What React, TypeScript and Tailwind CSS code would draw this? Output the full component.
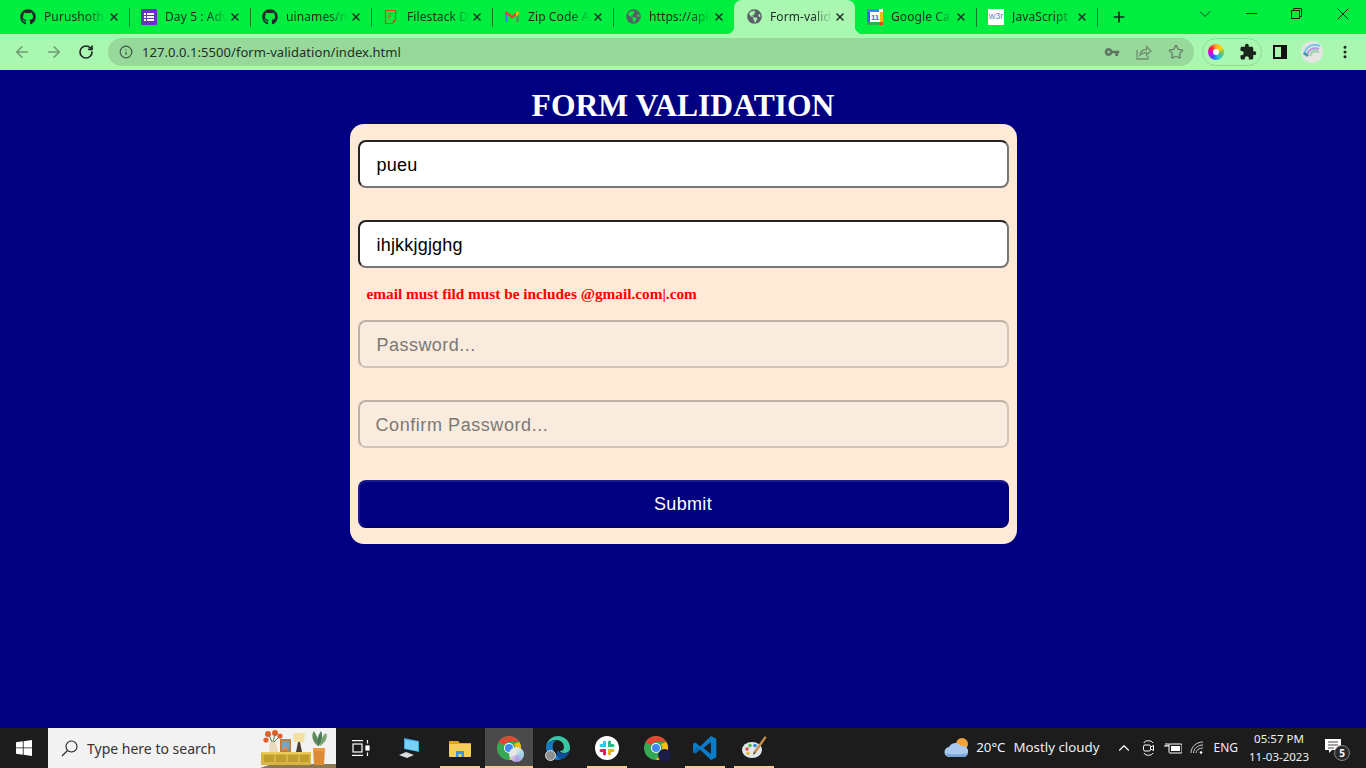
import React from "react";
import { ArrowLeft, ArrowRight, RotateCw, Info, Star, X, Plus, ChevronUp, MoreVertical } from "lucide-react";
import { FaGithub, FaGlobeAmericas } from "react-icons/fa";
import { MdExtension, MdVpnKey } from "react-icons/md";

const FormsIcon = () => (
  <svg width="16" height="16" viewBox="0 0 16 16"><rect width="16" height="16" rx="1" fill="#6b30c9" />
    <g fill="#fff"><rect x="3" y="4" width="2" height="2" /><rect x="6" y="4" width="7" height="2" /><rect x="3" y="7" width="2" height="2" /><rect x="6" y="7" width="7" height="2" /><rect x="3" y="10" width="2" height="2" /><rect x="6" y="10" width="7" height="2" /></g></svg>
);
const FilestackIcon = () => (
  <svg width="16" height="16" viewBox="0 0 16 16" fill="none"><path d="M2.500 1.500h10v10l-3 3h-7z" stroke="#ef3a1d" strokeWidth="1.200" /><path d="M6 4.500h4M6 7h3M6 4.500v5" stroke="#c9661a" strokeWidth="1.200" /><path d="M10 14v-3h3" fill="#ef3a1d" /></svg>
);
const GmailIcon = () => (
  <svg width="16" height="16" viewBox="0 0 16 16"><path d="M1 13V4l3 2.400V13H2a1 1 0 0 1-1-1z" fill="#4285f4" /><path d="M15 13V4l-3 2.400V13h2a1 1 0 0 0 1-1z" fill="#34a853" /><path d="M1 5V3.600C1 2.600 2.200 2.200 3 2.800L8 6.600l4-3v3L8 9.600 4 6.600z" fill="#ea4335" /><path d="M12 3.600l1-.8c.8-.6 2-.2 2 .8V5l-3 2.400z" fill="#fbbc04" /></svg>
);
const CalIcon = () => (
  <svg width="16" height="16" viewBox="0 0 16 16"><rect width="16" height="16" fill="#fff" /><rect x="0" y="0" width="12" height="3" fill="#4285f4" /><rect x="0" y="3" width="3" height="10" fill="#1a73e8" /><rect x="13" y="3" width="3" height="10" fill="#fbbc04" /><rect x="0" y="13" width="13" height="3" fill="#34a853" /><rect x="13" y="13" width="3" height="3" fill="#ea4335" /><text x="8" y="11" textAnchor="middle" fontSize="7.500" fontWeight="700" fill="#1a73e8" fontFamily="Liberation Sans, sans-serif">11</text></svg>
);
const W3Icon = () => (
  <div className="flex h-4 w-4 items-center justify-center bg-white text-[9px] leading-none text-[#5f87b8] [font-family:'Liberation_Sans',sans-serif]">w3r</div>
);
const GhIcon = () => <FaGithub size={16} className="text-[#1d2b31]" />;
const Globe = () => <FaGlobeAmericas size={15} className="text-[#586167]" />;

const tabs: { icon: React.ReactNode; title: string; active?: boolean; sep?: boolean }[] = [
  { icon: <GhIcon />, title: "Purushoth", sep: true },
  { icon: <FormsIcon />, title: "Day 5 : Adv", sep: true },
  { icon: <GhIcon />, title: "uinames/n", sep: true },
  { icon: <FilestackIcon />, title: "Filestack D", sep: true },
  { icon: <GmailIcon />, title: "Zip Code A", sep: true },
  { icon: <Globe />, title: "https://api" },
  { icon: <Globe />, title: "Form-valid", active: true },
  { icon: <CalIcon />, title: "Google Ca", sep: true },
  { icon: <W3Icon />, title: "JavaScript", sep: true },
];

function Tab({ icon, title, active, sep }: (typeof tabs)[number]) {
  return (
    <div className={`relative flex h-[34px] w-[121px] shrink-0 items-center pb-[1px] pl-3 ${active ? "rounded-t-lg bg-[#a9f7b1]" : ""}`}>
      {active && <span className="absolute -left-2 bottom-0 h-2 w-2 bg-[radial-gradient(circle_at_0_0,#00ee3f_8px,#a9f7b1_8.5px)]" />}
      {active && <span className="absolute -right-2 bottom-0 h-2 w-2 bg-[radial-gradient(circle_at_100%_0,#00ee3f_8px,#a9f7b1_8.5px)]" />}
      <span className="flex w-4 shrink-0 items-center justify-center">{icon}</span>
      <span className="ml-2 w-[62px] overflow-hidden whitespace-nowrap text-[12px] tracking-[0.1px] text-[#1e2a26] [mask-image:linear-gradient(90deg,#000_70%,transparent_100%)]">{title}</span>
      <X size={12} strokeWidth={3} className="ml-[2px] text-[#26302c]" />
      {sep && <span className="absolute -right-px top-[8px] h-[19px] w-px bg-[#0c7a34]" />}
    </div>
  );
}

const ColorWheel = () => (
  <span className="flex h-4 w-4 items-center justify-center rounded-full bg-[conic-gradient(#f9a825,#ffd600,#66bb6a,#26c6da,#2962ff,#d500f9,#ff1744,#f9a825)]">
    <span className="h-[6px] w-[6px] rounded-full bg-white" />
  </span>
);

const Share = () => (
  <svg width="16" height="16" viewBox="0 0 16 16" fill="none" stroke="#6f8d72" strokeWidth="1.300"><path d="M1 6v9h11v-3" /><path d="M4 11c.5-4 3-5.500 6.500-5.500V2.500L15 7l-4.500 4V8.300C8 8.300 6 9 4 11z" /></svg>
);

const Avatar = () => (
  <span className="relative block h-[22px] w-[22px] overflow-hidden rounded-full bg-[#e4e4e0]">
    <svg width="22" height="22" viewBox="0 0 22 22" fill="none" strokeWidth="2.200"><path d="M3 14C4 6 11 2 19 5" stroke="#7cc6e8" /><path d="M6 14C7 9 12 6 18 8" stroke="#b59ae0" /><path d="M9 15C10 11 13 9 18 11" stroke="#9bd6a6" /><path d="M3 12l4 3" stroke="#3a9a9a" /></svg>
  </span>
);

function Field({ value, placeholder, disabled, pad }: { value?: string; placeholder?: string; disabled?: boolean; pad?: string }) {
  return (
    <input
      readOnly
      disabled={disabled}
      value={value ?? ""}
      placeholder={placeholder}
      className={
        disabled
          ? `block h-12 w-full rounded-lg border-2 border-t-[#bdb0a5] border-r-[#d1c5bb] border-b-[#d1c5bb] border-l-[#bdb0a5] bg-[#f9ecdf] pt-[2px] text-[18px] outline-none placeholder:text-[#7b7874] [font-family:'Liberation_Sans',sans-serif] ${pad}`
          : "block h-12 w-full rounded-lg border-2 border-t-[#232323] border-r-[#767676] border-b-[#767676] border-l-[#232323] bg-white pl-[17px] pt-[2px] text-[18px] tracking-[0.2px] text-black outline-none [font-family:'Liberation_Sans',sans-serif]"
      }
    />
  );
}

const Illustration = () => (
  <svg width="78" height="40" viewBox="0 0 78 40">
    <path d="M2 40 L14 36 H78 V40z" fill="#8a7a4e" />
    <rect x="3" y="24" width="50" height="13" fill="#d9b441" />
    <rect x="3" y="24" width="50" height="2" fill="#e9c95c" />
    <g fill="#c19c2f"><rect x="6" y="27" width="10" height="7" /><rect x="18" y="27" width="10" height="7" /><rect x="30" y="27" width="10" height="7" /><rect x="42" y="27" width="9" height="7" /></g>
    <path d="M12 14h6l2 10h-9z" fill="#ecd9bd" />
    <g fill="#e4602a"><circle cx="10" cy="6" r="3" /><circle cx="17" cy="5" r="3" /><circle cx="22" cy="8" r="2.600" /><circle cx="8" cy="12" r="2.600" /></g>
    <path d="M14 14 L11 7M15 14 L17 6M16 14 L21 9" stroke="#5c7a45" strokeWidth="1" />
    <rect x="22" y="11" width="11" height="13" fill="#b9803f" /><rect x="24" y="13" width="7" height="9" fill="#6fa8c8" />
    <path d="M24 22l3-4 4 4z" fill="#d88a5c" />
    <path d="M35 5h12l-1 9H36z" fill="#f5dfa0" /><path d="M40 14h2l2 10h-6z" fill="#4a4038" />
    <path d="M60 18 C54 14 53 6 56 3 C58 7 61 10 61 18z" fill="#5f8a5e" /><path d="M62 18 C68 14 70 9 68 5 C65 7 62 12 62 18z" fill="#7aa36f" /><path d="M61 18 C58 14 60 7 63 3 C65 7 64 13 61 18z" fill="#4c7a58" />
    <path d="M55 20h12l-1 17H56z" fill="#df8a34" />
    <rect x="55" y="20" width="12" height="3" fill="#eb9b43" />
  </svg>
);

const Computer = () => (
  <svg width="24" height="24" viewBox="0 0 24 24" className="mr-[3px]"><path d="M7 2l15 3v11L7 13z" fill="#36a9e8" /><path d="M8 3.500l13 2.500v9L8 12.500z" fill="#7ad0f6" /><path d="M2 19l7-3 8 3-7 3z" fill="#d7dde2" /></svg>
);
const Folder = () => (
  <svg width="24" height="24" viewBox="0 0 24 24"><path d="M1 5h9l2 2h11v3H1z" fill="#e0a526" /><rect x="1" y="8" width="22" height="13" rx="1" fill="#f7ce56" /><path d="M8 21v-6h8v6h-2.500v-3h-3v3z" fill="#3a96dd" /></svg>
);
const Chrome = ({ badge }: { badge: React.ReactNode }) => (
  <span className="relative block h-[24px] w-[24px]">
    <svg width="24" height="24" viewBox="0 0 24 24"><circle cx="12" cy="12" r="12" fill="#34a853" /><path d="M12 0a12 12 0 0 1 10.400 6H12a6 6 0 0 0-5.200 3L1.600 6A12 12 0 0 1 12 0z" fill="#ea4335" /><path d="M22.400 6A12 12 0 0 1 12 24l5.200-9A6 6 0 0 0 17 8z" fill="#fbbc04" /><circle cx="12" cy="12" r="5" fill="#fff" /><circle cx="12" cy="12" r="4" fill="#4285f4" /></svg>
    {badge}
  </span>
);
const Edge = () => (
  <span className="relative block h-[24px] w-[24px]">
    <svg width="24" height="24" viewBox="0 0 24 24"><path d="M12 0a12 12 0 0 1 12 12c0 4-3 5-6 5-2 0-4-1-4-2 2 0 4-1 4-3.500C18 7 15 4 10 4 5 4 1 7 0 10.500 1 4.500 6 0 12 0z" fill="#39c6a4" /><path d="M0 11C1 6 6 4 10 5c-3 1-4 4-3 8 1 5 6 9 11 8-2 2-4 3-6 3C5 24 0 18 0 11z" fill="#1579c9" /><path d="M12 14c1 3 5 4 8 3 2-1 4-2 4-4-1 6-6 11-10 10-3-2-4-6-2-9z" fill="#0f4e9c" /></svg>
    <span className="absolute -left-[1px] bottom-[-1px] h-[11px] w-[11px] rounded-full border border-[#d8d8d8] bg-[#8e8e8e]" />
  </span>
);
const Slack = () => (
  <span className="flex h-[24px] w-[24px] items-center justify-center rounded-full bg-white">
    <svg width="16" height="16" viewBox="0 0 16 16" strokeWidth="3" strokeLinecap="round"><path d="M5.500 2v3.500H2" stroke="#36c5f0" fill="none" /><path d="M14 5.500h-3.500V2" stroke="#2eb67d" fill="none" /><path d="M10.500 14v-3.500H14" stroke="#ecb22e" fill="none" /><path d="M2 10.500h3.500V14" stroke="#e01e5a" fill="none" /></svg>
  </span>
);
const VsCode = () => (
  <svg width="26" height="26" viewBox="0 0 24 24"><path d="M17.500 1L7.500 10.500 3 7 1 8v8l2 1 4.500-3.500L17.500 23l5-2.500V3.500z" fill="#0a7cc7" /><path d="M17.500 6.500L10.500 12l7 5.500z" fill="#1c1c1c" /><path d="M1 16l2 1 4.500-3.500L5 11z" fill="#0a66a8" /></svg>
);
const Palette = () => (
  <svg width="26" height="26" viewBox="0 0 26 26"><ellipse cx="11" cy="15" rx="10" ry="8" fill="#dfe9ef" /><circle cx="6" cy="14" r="1.800" fill="#e0503c" /><circle cx="9" cy="10.500" r="1.800" fill="#54b948" /><circle cx="14" cy="10.500" r="1.800" fill="#2c88d9" /><circle cx="7" cy="18.500" r="1.800" fill="#e9b63a" /><path d="M24 1l1.500 1.500L15 18l-2-2z" fill="#c88f4c" /><path d="M13 16l2 2-3 2z" fill="#704a26" /></svg>
);
const TaskView = () => (
  <svg width="18" height="16" viewBox="0 0 18 16" fill="none" stroke="#fff" strokeWidth="1.200"><path d="M0 .6h11M0 15.400h11" /><rect x="1" y="4" width="9" height="8" /><path d="M15.500 0v3.500M15.500 12.500v3.500" /><rect x="14" y="6" width="3" height="4" fill="#fff" /></svg>
);
const Cloud = () => (
  <svg width="26" height="24" viewBox="0 0 26 24"><circle cx="18" cy="8" r="6" fill="#f1a33a" /><path d="M6 21a5 5 0 0 1-1-10 7 7 0 0 1 12-1 5.500 5.500 0 0 1 3 11z" fill="#a9c9ee" /><path d="M2 17c5 2 13 2 22 0-.5 2.500-2 4-4 4H6c-2 0-3.500-1.500-4-4z" fill="#7aa5dc" /></svg>
);

function TaskIcon({ children, on, active }: { children: React.ReactNode; on?: boolean; active?: boolean }) {
  return (
    <div className="relative flex h-10 w-[49px] shrink-0 items-center justify-center">
      {active && <span className="absolute inset-y-0 left-[1px] right-0 bg-[#4a4a4a]" />}
      <span className="relative">{children}</span>
      {on && <span className={`absolute bottom-0 h-[2px] bg-[#fbc98d] ${active ? "left-[1px] right-0" : "left-[5px] right-[4px]"}`} />}
    </div>
  );
}

export default function App() {
  return (
    <div className="flex h-screen w-full flex-col overflow-hidden bg-[#000080] [font-family:'Noto_Sans',sans-serif]">
      {/* Tab strip */}
      <div className="flex h-[34px] shrink-0 items-center bg-[#00ee3f] pl-2">
        {tabs.map((t) => <Tab key={t.title} {...t} />)}
        <Plus size={16} strokeWidth={2.5} className="ml-[14px] text-[#17241c]" />
        <div className="ml-auto flex items-center self-stretch pb-[7px]">
          <svg width="12" height="8" viewBox="0 0 12 8" fill="none" stroke="#1d3a28" className="mr-[35px]"><path d="M1 1.500l5 5 5-5" /></svg>
          <svg width="11" height="1" viewBox="0 0 11 1" className="mr-[34px]"><rect width="11" height="1" fill="#10281a" /></svg>
          <svg width="11" height="11" viewBox="0 0 11 11" fill="none" stroke="#10281a" className="mr-[35px]"><rect x=".5" y="2.500" width="8" height="8" /><path d="M2.500 2.500V.5h8v8H8.500" /></svg>
          <svg width="12" height="12" viewBox="0 0 12 12" fill="none" stroke="#10281a" className="mr-[17px]"><path d="M.5.5l11 11M11.500.5l-11 11" /></svg>
        </div>
      </div>
      {/* Toolbar */}
      <div className="flex h-[36px] shrink-0 items-center bg-[#a9f7b1] pb-[1px]">
        <ArrowLeft size={18} strokeWidth={2} className="ml-[13px] text-[#6f9d74]" />
        <ArrowRight size={18} strokeWidth={2} className="ml-[14px] text-[#6f9d74]" />
        <RotateCw size={16} strokeWidth={2.5} className="ml-[15px] text-[#1b2a1f]" />
        <div className="ml-[14px] flex h-[28px] w-[1086px] items-center rounded-full bg-[#97d99b] pl-[11px] pr-[10px]">
          <Info size={14} strokeWidth={2} className="text-[#3f5544]" />
          <span className="ml-[9px] pt-[2px] text-[13px] tracking-[0.05px] text-[#20302a]">127.0.0.1:5500/form-validation/index.html</span>
          <MdVpnKey size={16} className="ml-auto text-[#5e7362]" />
          <span className="ml-[16px]"><Share /></span>
          <Star size={16} strokeWidth={1.6} className="ml-[16px] text-[#5e7362]" />
        </div>
        <div className="ml-2 flex h-[28px] w-[60px] items-center justify-between rounded-full border border-[#8fdc97] pl-[5px] pr-[4px]">
          <ColorWheel />
          <MdExtension size={18} className="text-[#1a251c]" />
        </div>
        <svg width="14" height="14" viewBox="0 0 14 14" className="ml-[11px]"><rect x="1" y="1" width="12" height="12" fill="none" stroke="#111" strokeWidth="2" /><rect x="8" y="1" width="5" height="12" fill="#111" /></svg>
        <span className="ml-[14px]"><Avatar /></span>
        <MoreVertical size={16} strokeWidth={2.5} className="ml-[14px] text-[#1a251c]" />
      </div>
      {/* Page */}
      <main className="flex min-h-0 flex-1 flex-col items-center pt-[17px]">
        <h1 className="h-[37px] text-center text-[31.6px] font-bold leading-[38px] text-white [font-family:'Liberation_Serif',serif]">FORM VALIDATION</h1>
        <form className="w-[667px] rounded-[14px] bg-[#ffe9d7] px-2 pb-4 pt-4">
          <Field value="pueu" />
          <div className="h-8" />
          <Field value="ihjkkjgjghg" />
          <p className="flex h-[52px] items-center pl-[9px] text-[15.3px] font-bold text-[#ff0000] [font-family:'Liberation_Serif',serif]">email must fild must be includes @gmail.com|.com</p>
          <Field placeholder="Password..." disabled pad="pl-[17px] tracking-[0.47px]" />
          <div className="h-8" />
          <Field placeholder="Confirm Password..." disabled pad="pl-[16px] tracking-[0.57px]" />
          <div className="h-8" />
          <button type="button" className="block h-12 w-full rounded-lg border-2 border-t-[#1b1b8c] border-r-[#00006a] border-b-[#00006a] border-l-[#1b1b8c] bg-[#000080] pt-[1px] text-[18px] tracking-[0.33px] text-white [font-family:'Liberation_Sans',sans-serif]">Submit</button>
        </form>
      </main>
      {/* Taskbar */}
      <div className="flex h-10 shrink-0 items-center bg-[#1c1c1c] text-white">
        <div className="flex h-10 w-12 items-center justify-center">
          <svg width="16" height="16" viewBox="0 0 16 16" fill="#fff"><path d="M0 2.300L6.800 1.300V7.500H0zM7.600 1.200L16 0V7.500H7.600zM0 8.300H6.800V14.700L0 13.700zM7.600 8.300H16V16L7.600 14.800z" /></svg>
        </div>
        <div className="flex h-10 w-[288px] items-center overflow-hidden bg-[#f2f2f2] pl-[13px]">
          <svg width="17" height="17" viewBox="0 0 17 17" fill="none" stroke="#222" strokeWidth="1.100"><circle cx="10.500" cy="6.500" r="5.500" /><path d="M6.500 10.500L1 16" /></svg>
          <span className="ml-[9px] text-[14px] text-[#333]">Type here to search</span>
          <span className="ml-auto block"><Illustration /></span>
        </div>
        <div className="flex h-10 w-[49px] items-center justify-center"><TaskView /></div>
        <div className="w-[1px]" />
        <TaskIcon><Computer /></TaskIcon>
        <TaskIcon on><Folder /></TaskIcon>
        <TaskIcon on active>
          <Chrome badge={<span className="absolute -bottom-[2px] -right-[3px] h-[15px] w-[15px] rounded-full bg-[conic-gradient(#dfe6dd,#9fd5e8,#b59ae0,#e7e7e7,#dfe6dd)]" />} />
        </TaskIcon>
        <TaskIcon><Edge /></TaskIcon>
        <TaskIcon on><Slack /></TaskIcon>
        <TaskIcon>
          <Chrome badge={<span className="absolute -bottom-[2px] -right-[3px] h-[13px] w-[13px] rounded-full bg-[#1c1c4a]" />} />
        </TaskIcon>
        <TaskIcon on><VsCode /></TaskIcon>
        <TaskIcon on><Palette /></TaskIcon>
        <div className="ml-auto flex h-10 items-center">
          <Cloud />
          <span className="ml-[6px] text-[13.3px] text-[#f0f0f0]">20°C</span>
          <span className="ml-[8px] text-[13.3px] text-[#f0f0f0]">Mostly cloudy</span>
          <ChevronUp size={18} strokeWidth={1.5} className="ml-[16px] text-white" />
          <svg width="14" height="18" viewBox="0 0 14 18" fill="none" stroke="#fff" strokeWidth="1" className="ml-[9px]"><path d="M2 4c0-3 8-3 9 0M2 14c1 3 8 3 9 0" /><rect x="1.500" y="6" width="7" height="6" rx="1.500" /><path d="M8.500 8l3-1.500v5l-3-1.500" /></svg>
          <svg width="18" height="12" viewBox="0 0 18 12" className="ml-[8px]"><rect x="5" y="2" width="13" height="9" rx="1" fill="none" stroke="#fff" /><rect x="7" y="4" width="9" height="5" fill="#fff" /><path d="M0 4h5M2 1v3M4 1v3" stroke="#fff" /></svg>
          <svg width="14" height="14" viewBox="0 0 14 14" fill="none" stroke="#cfcfcf" strokeWidth="1" className="ml-[8px]"><path d="M1 12C1 6 6 1 13 1M3.500 12c0-4 4-8 9.500-8M6 12c0-2.500 3-5 7-5" /><circle cx="11" cy="11.500" r="1.300" fill="#fff" stroke="none" /></svg>
          <span className="ml-[9px] text-[12px] text-[#f0f0f0]">ENG</span>
          <div className="ml-[11px] flex w-[60px] flex-col items-center whitespace-nowrap text-[11.5px] leading-[18px] text-[#f0f0f0]">
            <span>05:57 PM</span>
            <span>11-03-2023</span>
          </div>
          <div className="relative ml-[16px] mr-[24px] h-5 w-[17px]">
            <svg width="17" height="17" viewBox="0 0 17 17"><path d="M0 1h16v11H7l-3 3v-3H0z" fill="#fff" /><path d="M3 4h10M3 7h10M3 10h6" stroke="#444" /></svg>
            <span className="absolute -bottom-[3px] -right-[8px] flex h-[16px] w-[16px] items-center justify-center rounded-full border border-[#888] bg-[#2a2a2a] text-[10px] font-bold leading-none">5</span>
          </div>
        </div>
      </div>
    </div>
  );
}
